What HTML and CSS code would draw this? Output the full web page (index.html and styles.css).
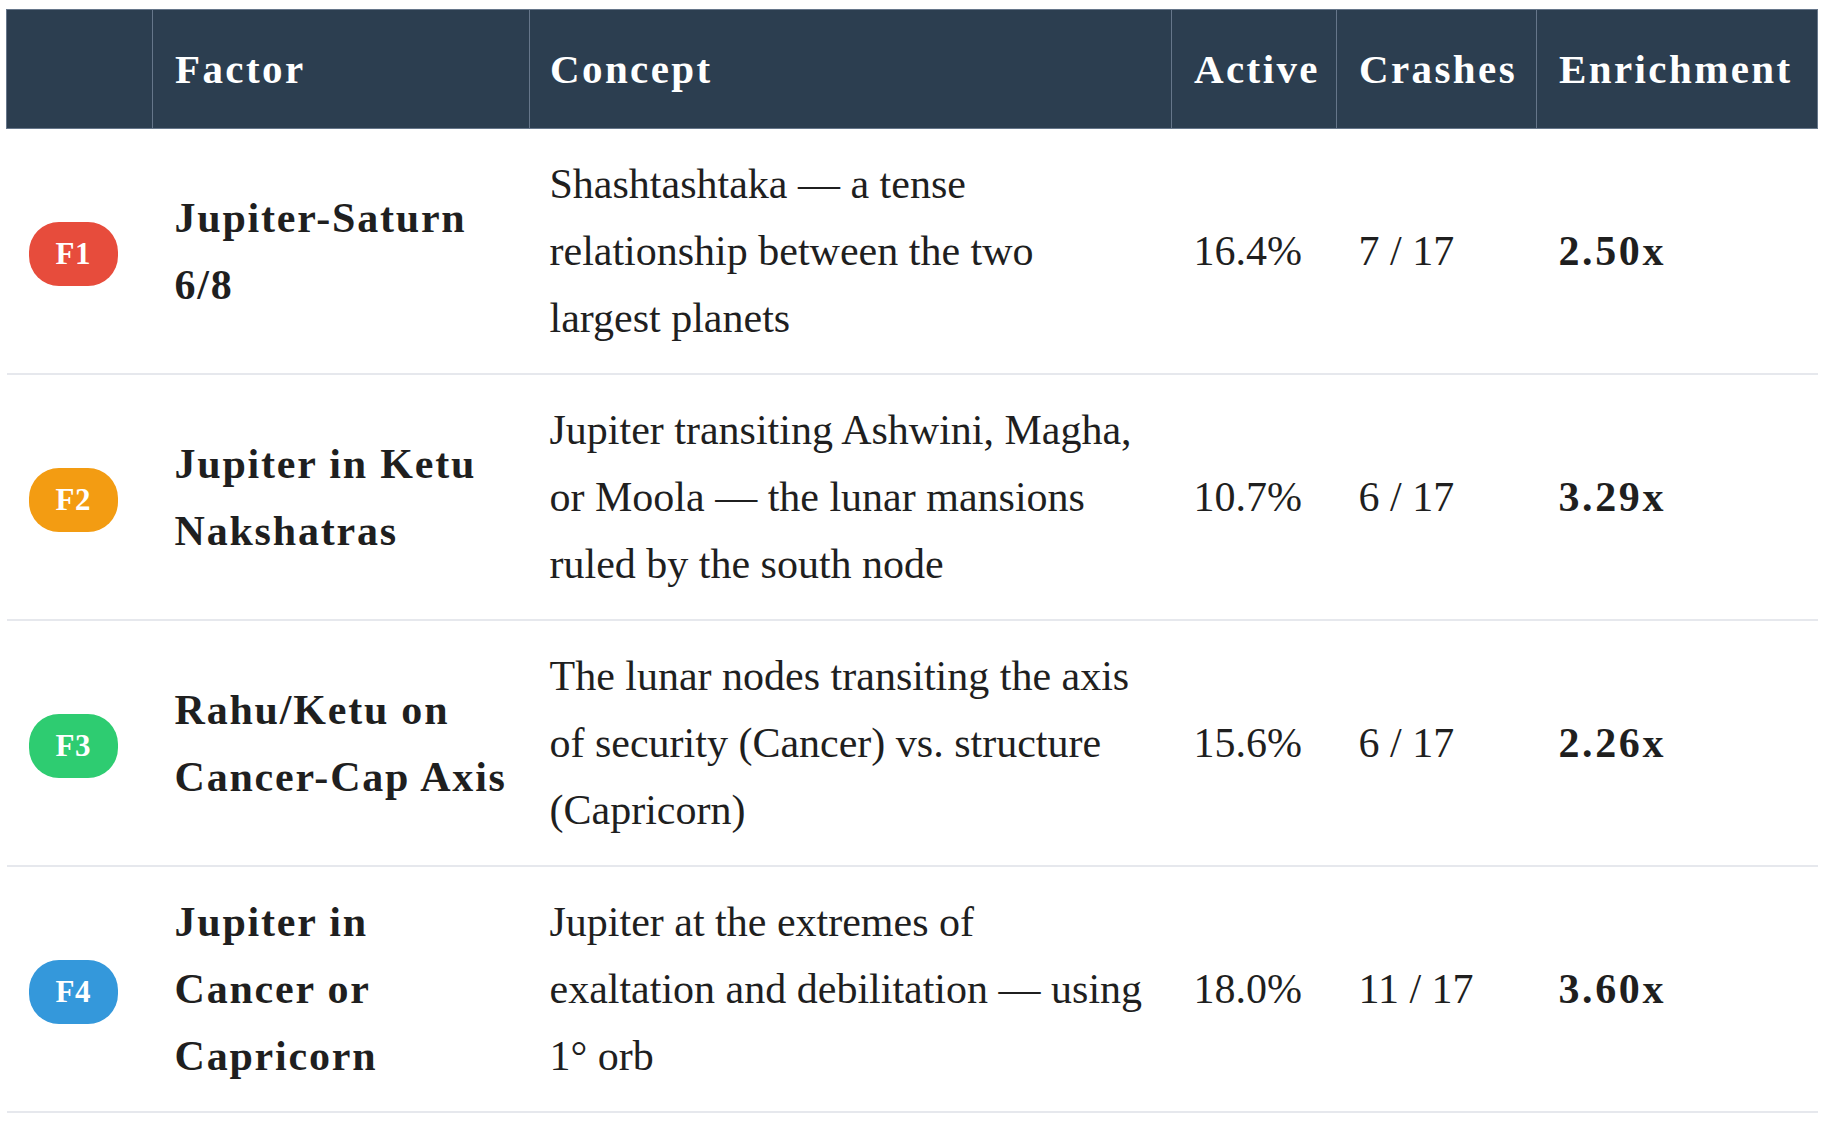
FILE: index.html
```html
<!DOCTYPE html>
<html lang="en">
<head>
<meta charset="utf-8">
<title>Factors</title>
<link rel="stylesheet" href="styles.css">
</head>
<body>
<div class="page">
  <table class="factors">
    <colgroup>
      <col class="c-badge">
      <col class="c-factor">
      <col class="c-concept">
      <col class="c-active">
      <col class="c-crashes">
      <col class="c-enrich">
    </colgroup>
    <thead>
      <tr>
        <th></th>
        <th>Factor</th>
        <th class="concept">Concept</th>
        <th>Active</th>
        <th>Crashes</th>
        <th>Enrichment</th>
      </tr>
    </thead>
    <tbody>
      <tr>
        <td><span class="badge badge-red">F1</span></td>
        <td class="factor">Jupiter-Saturn<br>6/8</td>
        <td class="concept">Shashtashtaka — a tense<br>relationship between the two<br>largest planets</td>
        <td>16.4%</td>
        <td>7 / 17</td>
        <td class="enrich">2.50x</td>
      </tr>
      <tr>
        <td><span class="badge badge-orange">F2</span></td>
        <td class="factor">Jupiter in Ketu<br>Nakshatras</td>
        <td class="concept">Jupiter transiting Ashwini, Magha,<br>or Moola — the lunar mansions<br>ruled by the south node</td>
        <td>10.7%</td>
        <td>6 / 17</td>
        <td class="enrich">3.29x</td>
      </tr>
      <tr>
        <td><span class="badge badge-green">F3</span></td>
        <td class="factor">Rahu/Ketu on<br>Cancer-Cap Axis</td>
        <td class="concept">The lunar nodes transiting the axis<br>of security (Cancer) vs. structure<br>(Capricorn)</td>
        <td>15.6%</td>
        <td>6 / 17</td>
        <td class="enrich">2.26x</td>
      </tr>
      <tr>
        <td><span class="badge badge-blue">F4</span></td>
        <td class="factor">Jupiter in<br>Cancer or<br>Capricorn</td>
        <td class="concept">Jupiter at the extremes of<br>exaltation and debilitation — using<br>1° orb</td>
        <td>18.0%</td>
        <td>11 / 17</td>
        <td class="enrich">3.60x</td>
      </tr>
    </tbody>
  </table>
</div>
</body>
</html>
```
FILE: styles.css
```css
html, body {
  margin: 0;
  padding: 0;
  background: #ffffff;
}

.page {
  padding: 9px 5px 0 6px;
  font-family: "Liberation Serif", "DejaVu Serif", serif;
  color: #1f1f1f;
}

.factors {
  width: 1811px;
  table-layout: fixed;
  border-collapse: collapse;
}

.c-badge { width: 146px; }
.c-factor { width: 377px; }
.c-concept { width: 642px; }
.c-active { width: 165px; }
.c-crashes { width: 200px; }
.c-enrich { width: 281px; }

.factors th {
  background: #2c3e50;
  color: #ffffff;
  font-weight: bold;
  font-size: 41px;
  line-height: 50px;
  letter-spacing: 2.4px;
  text-align: left;
  padding: 34px 22px 34px 22px;
  border: 1px solid #66768a;
  white-space: nowrap;
}

.factors td {
  font-size: 42px;
  line-height: 67px;
  padding: 22px 22px 21px 22px;
  vertical-align: middle;
  border-bottom: 2px solid #e6e8ed;
  white-space: nowrap;
}

.factors th.concept,
.factors td.concept {
  padding-left: 20px;
}

.factors td.factor {
  font-weight: bold;
  letter-spacing: 1.8px;
}

.factors td.enrich {
  font-weight: bold;
  letter-spacing: 2.6px;
}

.badge {
  display: inline-block;
  color: #ffffff;
  font-weight: bold;
  font-size: 31px;
  line-height: 34px;
  letter-spacing: 0.5px;
  padding: 15px 27px;
  border-radius: 30px;
  vertical-align: middle;
}

.badge-red { background: #e74c3c; }
.badge-orange { background: #f39c12; }
.badge-green { background: #2ecc71; }
.badge-blue { background: #3498db; }
```
